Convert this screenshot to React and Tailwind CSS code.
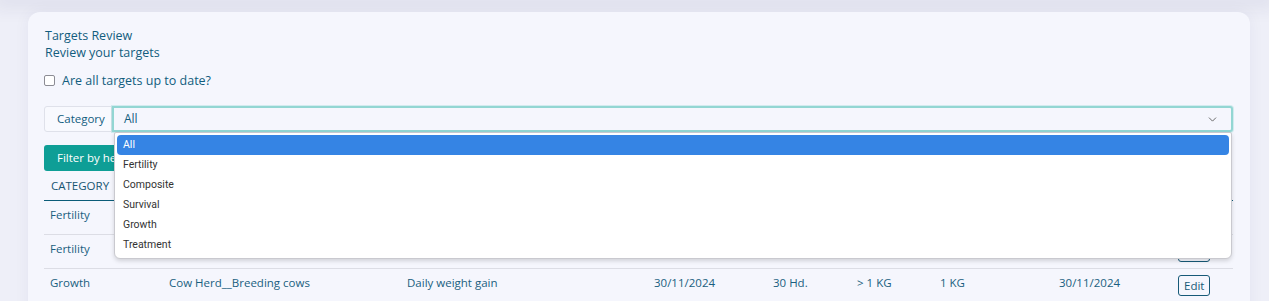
import { ChevronDown } from 'lucide-react';

const options = ['All', 'Fertility', 'Composite', 'Survival', 'Growth', 'Treatment'];

const columns = [
  'Category',
  'Herd',
  'Target',
  'Start date',
  'Herd size',
  'Goal',
  'Current',
  'Due date',
  '',
];

const rows = [
  ['Fertility', 'Cow Herd__Breeding cows', 'Calving rate', '30/11/2024', '30 Hd.', '> 80 %', '85 %', '30/11/2024'],
  ['Fertility', 'Cow Herd__Breeding cows', 'Pregnancy rate', '30/11/2024', '30 Hd.', '> 90 %', '92 %', '30/11/2024'],
  ['Growth', 'Cow Herd__Breeding cows', 'Daily weight gain', '30/11/2024', '30 Hd.', '> 1 KG', '1 KG', '30/11/2024'],
];

const gridCols =
  'grid grid-cols-[119px_238px_247px_119px_84px_83px_119px_119px_1fr]';

function CategorySelect() {
  return (
    <div className="flex h-[26px] mt-[17px]">
      <div className="flex items-center px-3 border border-[#dfe1ea] rounded-l-[3px] bg-[#f8f9fe] text-[11.5px] text-[#125d7e] w-[68px]">
        Category
      </div>
      <div className="relative flex-1">
        <div className="flex items-center justify-between h-full pl-[10px] pr-[12px] border-2 border-[#93d6d3] rounded-r-[3px] bg-[#f5f6fd] shadow-[0_0_0_1px_rgba(147,214,211,0.35)] text-[12px] text-[#125d7e]">
          <span>All</span>
          <ChevronDown className="w-[13px] h-[13px] text-[#555]" strokeWidth={1.6} />
        </div>
        <div className="absolute left-[2px] right-[1px] top-full z-10 bg-white rounded-b-[6px] rounded-t-[2px] border border-[#c9c9cf] shadow-[0_2px_4px_rgba(0,0,0,0.15)] pt-[2px] pb-[3px] px-[2px] font-['Roboto',sans-serif]">
          {options.map((opt, i) => (
            <div
              key={opt}
              className={`h-[20px] flex items-center px-[6px] text-[10.5px] rounded-[4px] ${
                i === 0 ? 'bg-[#3584e4] text-white' : 'text-[#333]'
              }`}>
              {opt}
            </div>
          ))}
        </div>
      </div>
    </div>
  );
}

function TargetsTable() {
  return (
    <div className="mt-[1px]">
      <div className={`${gridCols} h-[29px] items-center px-[7px] border-b border-[#0b5c78] text-[11.5px] uppercase text-[#175572]`}>
        {columns.map((c, i) => (
          <div key={i}>
            {c}
            {c && <span className="ml-1 text-[10px]">⇕</span>}
          </div>
        ))}
      </div>
      {rows.map((r, i) => (
        <div
          key={i}
          className={`${gridCols} h-[34px] px-[6px] pt-[6px] text-[11.5px] text-[#1a5f80] ${
            i < rows.length - 1 ? 'border-b border-[#dcdde5]' : ''
          }`}>
          {r.map((cell, j) => (
            <div key={j} className="leading-[14px] pt-[1px]">
              {cell}
            </div>
          ))}
          <div>
            <button className="h-[21px] px-[5px] border border-[#175a78] rounded-[3px] text-[11.5px] text-[#175a78] bg-transparent">
              Edit
            </button>
          </div>
        </div>
      ))}
    </div>
  );
}

export default function App() {
  return (
    <div className="min-h-[301px] bg-[#eeeff8] font-['Open_Sans',sans-serif] overflow-hidden">
      <div className="h-0 shadow-[0_0_18px_8px_rgba(40,40,90,0.08)]" />
      <div className="ml-[28px] mr-[19px] mt-[12px] bg-[#f5f6fd] rounded-[12px] shadow-[0_0_16px_rgba(40,40,90,0.05)] pl-[16px] pr-[17px] pt-[15px] pb-4">
        <div className="text-[12.5px] leading-[17px] text-[#125d7e]">
          <div className="pl-[1px]">Targets Review</div>
          <div className="pl-[1px]">Review your targets</div>
        </div>
        <label className="flex items-center gap-[7px] mt-[11px] text-[12.5px] leading-[17px] text-[#125d7e]">
          <span className="w-[11px] h-[11px] border border-[#8c8c94] rounded-[2px] bg-white" />
          Are all targets up to date?
        </label>
        <CategorySelect />
        <button className="mt-[13px] h-[26px] px-[13px] rounded-[3px] bg-[#0e9e96] text-white text-[11.5px]">
          Filter by herd
        </button>
        <TargetsTable />
      </div>
    </div>
  );
}
